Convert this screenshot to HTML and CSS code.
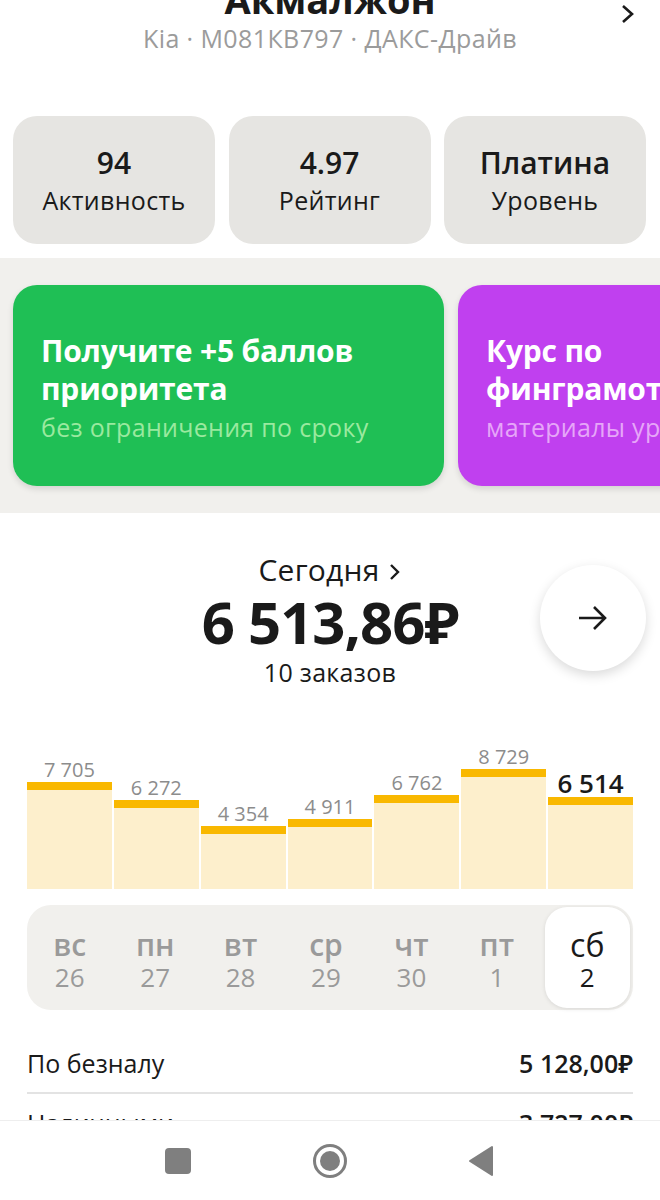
FILE: index.html
```html
<!DOCTYPE html>
<html lang="ru">
<head>
    <meta charset="UTF-8">
    <title>Профиль</title>
    <link rel="stylesheet" href="styles.css">
</head>
<body>
    <div class="head">
        <div class="name">Акмалжон</div>
        <div class="car">Kia · М081КВ797 · ДАКС-Драйв</div>
        <svg class="head-arrow" width="16" height="20" viewBox="0 0 16 20"><path d="M3 2l9 8-9 8" fill="none" stroke="#1a1a1a" stroke-width="2.6"/></svg>
    </div>

    <div class="stats">
        <div class="stat"><b>94</b><span>Активность</span></div>
        <div class="stat"><b>4.97</b><span>Рейтинг</span></div>
        <div class="stat"><b>Платина</b><span>Уровень</span></div>
        <div class="stat"></div>
    </div>

    <div class="promo">
        <div class="promo-card green">
            <div class="promo-title">Получите +5 баллов<br>приоритета</div>
            <div class="promo-sub">без ограничения по сроку</div>
        </div>
        <div class="promo-card purple">
            <div class="promo-title">Курс по<br>финграмотности</div>
            <div class="promo-sub">материалы уровня</div>
        </div>
    </div>

    <div class="today">
        <div class="today-side"></div>
        <div class="today-main">
            <div class="today-label">Сегодня <svg width="12" height="18" viewBox="0 0 12 18"><path d="M2 2l7 7-7 7" fill="none" stroke="#1a1a1a" stroke-width="2.4"/></svg></div>
            <div class="today-sum">6 513,86₽</div>
            <div class="today-orders">10 заказов</div>
        </div>
        <div class="today-side right">
            <div class="round-btn">
                <svg width="32" height="28" viewBox="0 0 32 28"><path d="M2 14h26M17 3l11 11-11 11" fill="none" stroke="#1a1a1a" stroke-width="2.6"/></svg>
            </div>
        </div>
    </div>

    <div class="chart">
        <div class="col"><span class="val">7 705</span><div class="bar" style="height:107px"></div></div>
        <div class="col"><span class="val">6 272</span><div class="bar" style="height:89px"></div></div>
        <div class="col"><span class="val">4 354</span><div class="bar" style="height:63px"></div></div>
        <div class="col"><span class="val">4 911</span><div class="bar" style="height:70px"></div></div>
        <div class="col"><span class="val">6 762</span><div class="bar" style="height:94px"></div></div>
        <div class="col"><span class="val">8 729</span><div class="bar" style="height:120px"></div></div>
        <div class="col current"><span class="val">6 514</span><div class="bar" style="height:92px"></div></div>
    </div>

    <div class="days">
        <div class="day"><b>вс</b><span>26</span></div>
        <div class="day"><b>пн</b><span>27</span></div>
        <div class="day"><b>вт</b><span>28</span></div>
        <div class="day"><b>ср</b><span>29</span></div>
        <div class="day"><b>чт</b><span>30</span></div>
        <div class="day"><b>пт</b><span>1</span></div>
        <div class="day active"><b>сб</b><span>2</span></div>
    </div>

    <div class="rows">
        <div class="row"><span>По безналу</span><span>5 128,00₽</span></div>
        <div class="row"><span>Наличными</span><span>3 727,00₽</span></div>
    </div>

    <div class="navbar">
        <svg width="28" height="28" viewBox="0 0 28 28"><rect x="1" y="1" width="26" height="26" rx="4" fill="#7f7f7f"/></svg>
        <svg width="36" height="36" viewBox="0 0 36 36"><circle cx="18" cy="18" r="15.5" fill="none" stroke="#7f7f7f" stroke-width="3"/><circle cx="18" cy="18" r="10" fill="#7f7f7f"/></svg>
        <svg width="28" height="32" viewBox="0 0 28 32"><path d="M24 2v28L2 16z" fill="#7f7f7f" stroke="#7f7f7f" stroke-width="2" stroke-linejoin="round"/></svg>
    </div>
</body>
</html>
```

FILE: styles.css
```css
*{
    margin: 0;
    padding: 0;
    box-sizing: border-box;
}
body{
    font-family: "Open Sans", "Noto Sans", sans-serif;
    color: #1a1a1a;
    background: #fff;
    width: 660px;
    overflow: hidden;
}
.head{
    position: relative;
    text-align: center;
    margin-top: -24px;
    height: 124px;
}
.name{
    font-size: 38px;
    font-weight: 700;
    line-height: 46px;
}
.car{
    font-size: 25px;
    line-height: 32px;
    color: #9b9b9b;
    letter-spacing: 0.4px;
}
.head-arrow{
    position: absolute;
    right: 24px;
    top: 28px;
}
.stats{
    display: flex;
    gap: 13.5px;
    padding: 16px 0 14px 13px;
    overflow: hidden;
}
.stat{
    flex: 0 0 202px;
    height: 128px;
    border-radius: 24px;
    background: #e6e5e2;
    display: flex;
    flex-direction: column;
    align-items: center;
    justify-content: center;
    gap: 1px;
}
.stat b{
    font-size: 30px;
    line-height: 38px;
    font-weight: 600;
}
.stat span{
    font-size: 25px;
    line-height: 34px;
    letter-spacing: 0.3px;
}
.promo{
    background: #f1f0ed;
    display: flex;
    gap: 14px;
    padding: 27px 0 27px 13px;
    overflow: hidden;
}
.promo-card{
    flex: 0 0 431px;
    height: 201px;
    border-radius: 24px;
    padding: 47px 28px 0 28px;
    box-shadow: 0 3px 6px rgba(0,0,0,0.12);
    color: #fff;
    overflow: hidden;
    white-space: nowrap;
}
.green{
    background: #1fbf55;
}
.purple{
    background: #c040ef;
}
.promo-title{
    font-size: 30px;
    font-weight: 700;
    line-height: 38px;
    letter-spacing: -0.2px;
}
.promo-sub{
    font-size: 25px;
    line-height: 38px;
    letter-spacing: 0.3px;
}
.green .promo-sub{
    color: #9ae99f;
}
.purple .promo-sub{
    color: #e6a6f8;
}
.today{
    display: grid;
    grid-template-columns: 1fr auto 1fr;
    align-items: center;
    padding: 38px 14px 0 14px;
}
.today-side.right{
    display: flex;
    justify-content: flex-end;
}
.today-main{
    text-align: center;
}
.today-label{
    font-size: 30px;
    line-height: 38px;
    letter-spacing: 0.2px;
}
.today-label svg{
    margin-left: 2px;
}
.today-sum{
    font-size: 58px;
    font-weight: 700;
    line-height: 66px;
    letter-spacing: -1px;
}
.today-orders{
    font-size: 25px;
    line-height: 34px;
    letter-spacing: 0.3px;
}
.round-btn{
    width: 106px;
    height: 106px;
    border-radius: 50%;
    background: #fff;
    box-shadow: 0 4px 12px rgba(0,0,0,0.15);
    display: flex;
    align-items: center;
    justify-content: center;
    margin-top: -4px;
}
.chart{
    display: flex;
    align-items: flex-end;
    gap: 2px;
    height: 160px;
    margin: 40px 27px 0 27px;
}
.col{
    flex: 1;
    display: flex;
    flex-direction: column;
    align-items: center;
}
.val{
    font-size: 20px;
    line-height: 24px;
    color: #8c8c8c;
}
.bar{
    width: 100%;
    background: #fdefcc;
    border-top: 8px solid #f9b800;
}
.current .val{
    font-size: 26px;
    line-height: 32px;
    font-weight: 600;
    color: #1a1a1a;
    margin-bottom: -2px;
}
.days{
    display: flex;
    margin: 16px 27px 0 27px;
    height: 105px;
    padding: 2px 0;
    background: #f1f0ed;
    border-radius: 24px;
}
.day{
    flex: 1;
    display: flex;
    flex-direction: column;
    align-items: center;
    justify-content: center;
    color: #9a9a9a;
    border-radius: 22px;
    padding-top: 4px;
}
.day b{
    font-size: 30px;
    line-height: 34px;
    font-weight: 600;
}
.day span{
    font-size: 26px;
    line-height: 30px;
}
.day.active{
    background: #fff;
    color: #1a1a1a;
    box-shadow: 0 1px 4px rgba(0,0,0,0.1);
    margin: 0 3px 0 5px;
}
.day.active b{
    font-weight: 400;
    font-size: 32px;
}
.rows{
    margin: 24px 27px 0 27px;
}
.row{
    display: flex;
    justify-content: space-between;
    font-size: 25px;
    height: 60px;
    align-items: center;
    border-bottom: 2px solid #e3e3e3;
}
.row span:last-child{
    font-weight: 600;
}
.navbar{
    position: fixed;
    left: 0;
    bottom: 0;
    width: 660px;
    height: 80px;
    background: #fff;
    border-top: 1px solid #eeeeee;
    display: flex;
    align-items: center;
    justify-content: center;
    gap: 120px;
}
```
